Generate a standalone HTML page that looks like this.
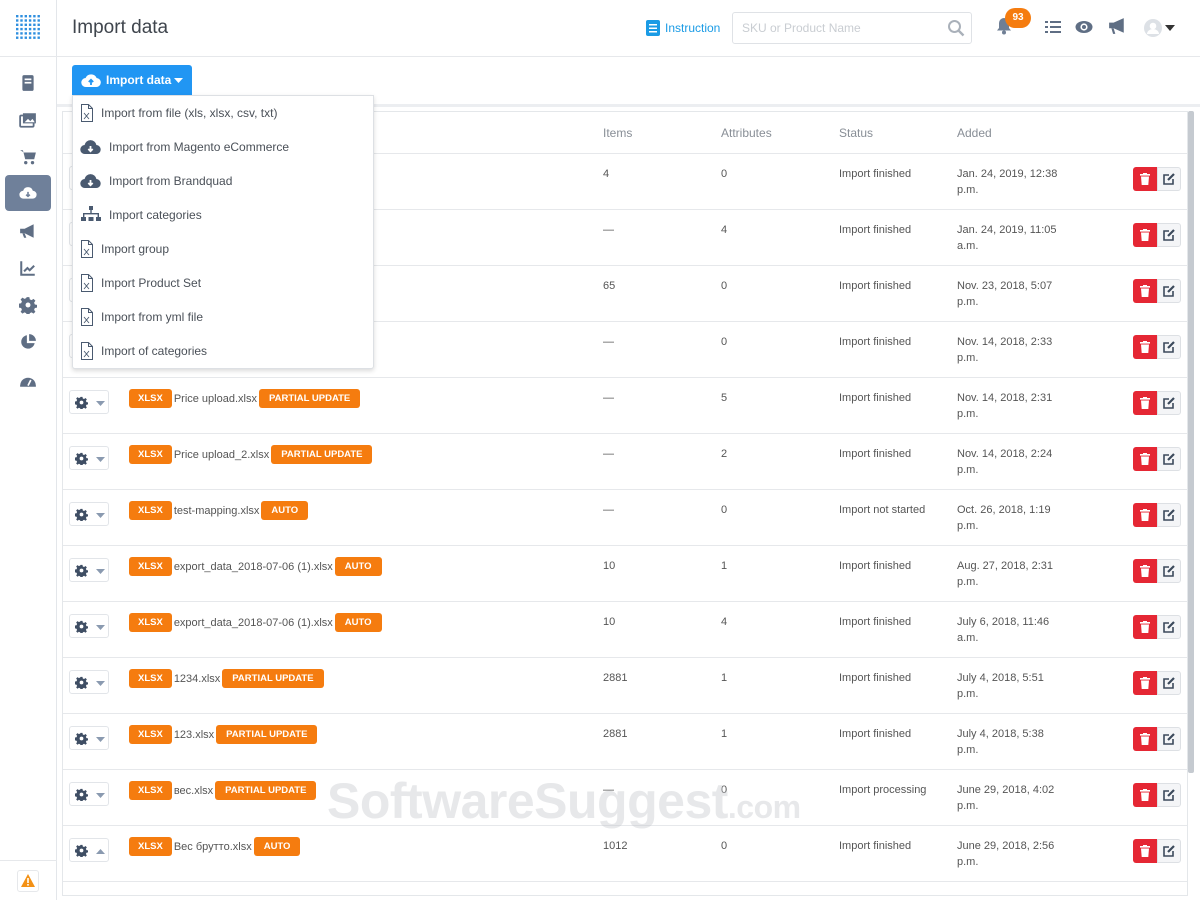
<!DOCTYPE html>
<html><head><meta charset="utf-8"><style>
*{box-sizing:border-box;margin:0;padding:0}
body{width:1200px;height:900px;overflow:hidden;background:#fff;font-family:"Liberation Sans","DejaVu Sans",sans-serif;color:#444;position:relative}
.a{position:absolute}
.sb{left:0;top:0;width:57px;height:900px;border-right:1px solid #e3e6ea;background:#fff}
.hdr{left:57px;top:0;width:1143px;height:57px;border-bottom:1px solid #e6e8eb;background:#fff}
.main{left:57px;top:57px;width:1143px;height:843px;background:#fff}
.card{left:62px;top:111px;width:1126px;height:785px;background:#fff;border:1px solid #e4e7ea}
.row{left:63px;width:1124px;height:56px;border-top:1px solid #e6e8eb}
.t{font-size:11px;color:#555;position:absolute;white-space:nowrap}
.badge{position:absolute;background:#f57c0f;color:#fff;font-size:9.5px;font-weight:bold;height:19px;line-height:19px;border-radius:3px;text-align:center;padding:0 10px}
.gear{position:absolute;left:6px;top:12px;width:40px;height:24px;border:1px solid #e2e5e9;border-radius:3px;background:#fff}
.del{position:absolute;left:1070px;top:13px;width:24px;height:24px;background:#e52734;border-radius:3px 0 0 3px}
.ed{position:absolute;left:1094px;top:13px;width:24px;height:24px;background:#f4f5f7;border:1px solid #dde0e4;border-radius:0 3px 3px 0}
.si{left:19px;width:18px;height:18px}
.dd{left:72px;top:95px;width:302px;height:274px;background:#fff;border:1px solid #dde0e4;box-shadow:0 2px 5px rgba(0,0,0,.15);border-radius:0 0 3px 3px}
.di{position:absolute;font-size:12px;color:#4a5058;white-space:nowrap}
</style></head><body>
<div class="a sb"></div>
<svg class="a" style="left:16px;top:15px" width="24" height="24" viewBox="0 0 24 24">
<g fill="#2f8fdf">
<rect x="0" y="0" width="2.4" height="2.4"/><rect x="4.3" y="0" width="2.4" height="2.4"/><rect x="8.6" y="0" width="2.4" height="2.4"/><rect x="12.9" y="0" width="2.4" height="2.4"/><rect x="17.2" y="0" width="2.4" height="2.4"/><rect x="21.5" y="0" width="2.4" height="2.4"/>
<rect x="0" y="4.3" width="2.4" height="2.4"/><rect x="4.3" y="4.3" width="2.4" height="2.4"/><rect x="8.6" y="4.3" width="2.4" height="2.4"/><rect x="12.9" y="4.3" width="2.4" height="2.4"/><rect x="17.2" y="4.3" width="2.4" height="2.4"/><rect x="21.5" y="4.3" width="2.4" height="2.4"/>
<rect x="0" y="8.6" width="2.4" height="2.4"/><rect x="4.3" y="8.6" width="2.4" height="2.4"/><rect x="8.6" y="8.6" width="2.4" height="2.4"/><rect x="12.9" y="8.6" width="2.4" height="2.4"/><rect x="17.2" y="8.6" width="2.4" height="2.4"/><rect x="21.5" y="8.6" width="2.4" height="2.4"/>
<rect x="0" y="12.9" width="2.4" height="2.4"/><rect x="4.3" y="12.9" width="2.4" height="2.4"/><rect x="8.6" y="12.9" width="2.4" height="2.4"/><rect x="12.9" y="12.9" width="2.4" height="2.4"/><rect x="17.2" y="12.9" width="2.4" height="2.4"/><rect x="21.5" y="12.9" width="2.4" height="2.4"/>
<rect x="0" y="17.2" width="2.4" height="2.4"/><rect x="4.3" y="17.2" width="2.4" height="2.4"/><rect x="8.6" y="17.2" width="2.4" height="2.4"/><rect x="12.9" y="17.2" width="2.4" height="2.4"/><rect x="17.2" y="17.2" width="2.4" height="2.4"/><rect x="21.5" y="17.2" width="2.4" height="2.4"/>
<rect x="0" y="21.5" width="2.4" height="2.4"/><rect x="4.3" y="21.5" width="2.4" height="2.4"/><rect x="8.6" y="21.5" width="2.4" height="2.4"/><rect x="12.9" y="21.5" width="2.4" height="2.4"/><rect x="17.2" y="21.5" width="2.4" height="2.4"/><rect x="21.5" y="21.5" width="2.4" height="2.4"/>
</g></svg>
<div class="a" style="left:0;top:56px;width:57px;border-top:1px solid #e6e8eb"></div>
<svg class="a si" style="top:74px" viewBox="0 0 16 16"><rect x="3" y="1" width="10" height="14" rx="1.5" fill="#5f6e84"/><rect x="5" y="4" width="6" height="1.5" fill="#fff"/><rect x="5" y="7" width="6" height="1.5" fill="#fff"/></svg>
<svg class="a si" style="top:111px" viewBox="0 0 16 16"><rect x="1" y="4" width="12" height="10" rx="1" fill="none" stroke="#5f6e84" stroke-width="1.6"/><rect x="3.5" y="2" width="11.5" height="9" fill="#5f6e84"/><path d="M5 10l3-3 2 2 2-2 2 3z" fill="#fff"/></svg>
<svg class="a si" style="top:148px" viewBox="0 0 16 16"><path d="M1 2h2.5l2 8h8l1.5-6H4.5" fill="#5f6e84"/><circle cx="6" cy="13" r="1.5" fill="#5f6e84"/><circle cx="12" cy="13" r="1.5" fill="#5f6e84"/></svg>
<div class="a" style="left:5px;top:175px;width:46px;height:36px;background:#6f809a;border-radius:4px"></div>
<svg class="a si" style="left:19px;top:184px" viewBox="0 0 16 16"><path d="M4 13a3.5 3.5 0 0 1-.3-7A4.5 4.5 0 0 1 12.3 6 3.5 3.5 0 0 1 12 13z" fill="#fff"/><path d="M8 7v4M6.3 9.5L8 11l1.7-1.5" stroke="#6f809a" stroke-width="1.4" fill="none"/></svg>
<svg class="a si" style="top:222px" viewBox="0 0 16 16"><path d="M1 6h4l8-4v12L5 10H1z" fill="#5f6e84"/><path d="M3 10l1.5 4h2L5 10" fill="#5f6e84"/></svg>
<svg class="a si" style="top:259px" viewBox="0 0 16 16"><path d="M2 2v12h12" stroke="#5f6e84" stroke-width="1.8" fill="none"/><path d="M4.5 11l3-3 2 2 4-4" stroke="#5f6e84" stroke-width="1.8" fill="none"/></svg>
<svg class="a si" style="top:296px" viewBox="0 0 16 16"><path d="M6.8 1h2.4l.4 2 1.6.7 1.7-1.2 1.7 1.7-1.2 1.7.7 1.6 2 .4v2.4l-2 .4-.7 1.6 1.2 1.7-1.7 1.7-1.7-1.2-1.6.7-.4 2H6.8l-.4-2-1.6-.7-1.7 1.2-1.7-1.7 1.2-1.7-.7-1.6-2-.4V6.8l2-.4.7-1.6-1.2-1.7 1.7-1.7 1.7 1.2 1.6-.7z" fill="#5f6e84"/><circle cx="8" cy="8" r="2.2" fill="#fff"/></svg>
<svg class="a si" style="top:333px" viewBox="0 0 16 16"><path d="M7 2a6 6 0 1 0 6.9 7H7z" fill="#5f6e84"/><path d="M9 1v6h6A6 6 0 0 0 9 1z" fill="#5f6e84"/></svg>
<svg class="a si" style="top:371px" viewBox="0 0 16 16"><path d="M1 13a7 7 0 0 1 14 0v1H1z" fill="#5f6e84"/><path d="M8 13l2.5-5" stroke="#fff" stroke-width="1.5"/></svg>
<div class="a" style="left:0;top:860px;width:57px;border-top:1px solid #e6e8eb"></div>
<div class="a" style="left:17px;top:870px;width:22px;height:22px;border:1px solid #e6e8eb;border-radius:3px;background:#fff"></div>
<svg class="a" style="left:21px;top:874px" width="14" height="13" viewBox="0 0 14 13"><path d="M7 0L14 13H0z" fill="#f39116"/><rect x="6.2" y="4" width="1.6" height="5" fill="#fff"/><rect x="6.2" y="10" width="1.6" height="1.6" fill="#fff"/></svg>

<div class="a hdr"></div>
<div class="a" style="left:72px;top:17px;font-size:19px;color:#3f454d">Import data</div>
<svg class="a" style="left:646px;top:20px" width="14" height="16" viewBox="0 0 14 16"><rect x="0" y="0" width="14" height="16" rx="2" fill="#1a9be5"/><rect x="3" y="4" width="8" height="1.5" fill="#fff"/><rect x="3" y="7.5" width="8" height="1.5" fill="#fff"/><rect x="3" y="11" width="8" height="1.5" fill="#fff"/></svg>
<div class="a" style="left:665px;top:21px;font-size:12px;color:#1a9be5">Instruction</div>
<div class="a" style="left:732px;top:12px;width:240px;height:32px;border:1px solid #dfe2e6;border-radius:3px"></div>
<div class="a" style="left:742px;top:21px;font-size:12px;color:#c9cdd2">SKU or Product Name</div>
<svg class="a" style="left:947px;top:19px" width="18" height="18" viewBox="0 0 18 18"><circle cx="7.5" cy="7.5" r="5.5" fill="none" stroke="#aab1ba" stroke-width="2"/><path d="M11.5 11.5l5 5" stroke="#aab1ba" stroke-width="2.4"/></svg>
<svg class="a" style="left:996px;top:17px" width="16" height="18" viewBox="0 0 16 18"><path d="M8 1a5 5 0 0 0-5 5v5l-2 2.5h14L13 11V6a5 5 0 0 0-5-5z" fill="#6f7f95"/><circle cx="8" cy="15.5" r="2" fill="#6f7f95"/></svg>
<div class="a" style="left:1005px;top:8px;width:26px;height:20px;border-radius:10px;background:#f57c0f;color:#fff;font-size:10px;font-weight:bold;text-align:center;line-height:20px">93</div>
<svg class="a" style="left:1045px;top:20px" width="16" height="14" viewBox="0 0 16 14"><g fill="#5f6e84"><rect x="5" y="1" width="11" height="2"/><rect x="5" y="6" width="11" height="2"/><rect x="5" y="11" width="11" height="2"/><rect x="0" y="1" width="3" height="2"/><rect x="0" y="6" width="3" height="2"/><rect x="0" y="11" width="3" height="2"/></g></svg>
<svg class="a" style="left:1075px;top:20px" width="18" height="14" viewBox="0 0 18 14"><ellipse cx="9" cy="7" rx="8.5" ry="6" fill="#5f6e84"/><circle cx="9" cy="7" r="3.6" fill="#fff"/><circle cx="9" cy="7" r="2" fill="#5f6e84"/></svg>
<svg class="a" style="left:1108px;top:17px" width="18" height="18" viewBox="0 0 16 16"><path d="M1 5h4l9-4v13L5 10H1z" fill="#5f6e84"/><path d="M3 10l1.5 5h2L5 10" fill="#5f6e84"/></svg>
<svg class="a" style="left:1144px;top:19px" width="18" height="18" viewBox="0 0 18 18"><circle cx="9" cy="9" r="9" fill="#dde1e6"/><circle cx="9" cy="7" r="3.3" fill="#fff"/><path d="M3 15a6 5 0 0 1 12 0" fill="#fff"/></svg>
<svg class="a" style="left:1165px;top:25px" width="10" height="6"><path d="M0 0h10L5 6z" fill="#333"/></svg>

<div class="a main"></div>
<div class="a" style="left:57px;top:104px;width:1143px;height:3px;background:#eceef1"></div>
<div class="a card"></div>
<div class="a" style="left:1188px;top:111px;width:6px;height:662px;background:#c5cad0;border-radius:2px"></div>
<div class="t" style="left:603px;top:126px;font-size:12px;color:#888e96">Items</div>
<div class="t" style="left:721px;top:126px;font-size:12px;color:#888e96">Attributes</div>
<div class="t" style="left:839px;top:126px;font-size:12px;color:#888e96">Status</div>
<div class="t" style="left:957px;top:126px;font-size:12px;color:#888e96">Added</div>

<div id="rows"></div>
<script>
var R=[
["Import_1.xlsx","AUTO","4","0","Import finished","Jan. 24, 2019, 12:38","p.m."],
["Import_2.xlsx","AUTO","—","4","Import finished","Jan. 24, 2019, 11:05","a.m."],
["Import_3.xlsx","AUTO","65","0","Import finished","Nov. 23, 2018, 5:07","p.m."],
["Import_4.xlsx","AUTO","—","0","Import finished","Nov. 14, 2018, 2:33","p.m."],
["Price upload.xlsx","PARTIAL UPDATE","—","5","Import finished","Nov. 14, 2018, 2:31","p.m."],
["Price upload_2.xlsx","PARTIAL UPDATE","—","2","Import finished","Nov. 14, 2018, 2:24","p.m."],
["test-mapping.xlsx","AUTO","—","0","Import not started","Oct. 26, 2018, 1:19","p.m."],
["export_data_2018-07-06 (1).xlsx","AUTO","10","1","Import finished","Aug. 27, 2018, 2:31","p.m."],
["export_data_2018-07-06 (1).xlsx","AUTO","10","4","Import finished","July 6, 2018, 11:46","a.m."],
["1234.xlsx","PARTIAL UPDATE","2881","1","Import finished","July 4, 2018, 5:51","p.m."],
["123.xlsx","PARTIAL UPDATE","2881","1","Import finished","July 4, 2018, 5:38","p.m."],
["вес.xlsx","PARTIAL UPDATE","—","0","Import processing","June 29, 2018, 4:02","p.m."],
["Вес брутто.xlsx","AUTO","1012","0","Import finished","June 29, 2018, 2:56","p.m."]];
var G='<path d="M6.8 1h2.4l.4 2 1.6.7 1.7-1.2 1.7 1.7-1.2 1.7.7 1.6 2 .4v2.4l-2 .4-.7 1.6 1.2 1.7-1.7 1.7-1.7-1.2-1.6.7-.4 2H6.8l-.4-2-1.6-.7-1.7 1.2-1.7-1.7 1.2-1.7-.7-1.6-2-.4V6.8l2-.4.7-1.6-1.2-1.7 1.7-1.7 1.7 1.2 1.6-.7z" fill="#3f4e64"/><circle cx="8" cy="8" r="2.3" fill="#fff"/>';
var h="";
R.forEach(function(r,i){var t=153+i*56;
h+='<div class="a row" style="top:'+t+'px">'+
'<div class="gear"><svg style="position:absolute;left:5px;top:5px" width="13" height="13" viewBox="0 0 16 16">'+G+'</svg><svg style="position:absolute;left:26px;top:10px" width="9" height="5"><path d="'+(i==12?'M0 5h9L4.5 0z':'M0 0h9L4.5 5z')+'" fill="#8a9ab0"/></svg></div>'+
'<div style="position:absolute;left:66px;top:11px;display:flex;align-items:center;height:19px"><span class="badge" style="position:static;padding:0 9px">XLSX</span><span style="font-size:11px;color:#555;margin:0 2px;white-space:nowrap">'+r[0]+'</span><span class="badge" style="position:static">'+r[1]+'</span></div>'+
'<div class="t" style="left:540px;top:14px">'+r[2]+'</div>'+
'<div class="t" style="left:658px;top:14px">'+r[3]+'</div>'+
'<div class="t" style="left:776px;top:14px">'+r[4]+'</div>'+
'<div class="t" style="left:894px;top:14px">'+r[5]+'</div>'+
'<div class="t" style="left:894px;top:30px">'+r[6]+'</div>'+
'<div class="del"><svg style="position:absolute;left:7px;top:6px" width="10" height="12" viewBox="0 0 10 12"><rect x="0" y="1" width="10" height="1.6" fill="#fff"/><rect x="3" y="0" width="4" height="1.5" fill="#fff"/><path d="M1 3.5h8l-.7 8.5H1.7z" fill="#fff"/></svg></div>'+
'<div class="ed"><svg style="position:absolute;left:5px;top:5px" width="12" height="12" viewBox="0 0 12 12"><path d="M6 2H1v9h9V6" fill="none" stroke="#3c4a5c" stroke-width="1.6"/><path d="M5 7l6-6" stroke="#3c4a5c" stroke-width="2.2"/></svg></div>'+
'</div>';});
h+='<div class="a" style="left:63px;top:881px;width:1124px;border-top:1px solid #e6e8eb"></div>';
document.getElementById("rows").outerHTML=h;
</script>

<div class="a" style="left:327px;top:772px;font-size:50px;font-weight:bold;color:rgba(195,198,202,.4);white-space:nowrap;letter-spacing:-0.5px">SoftwareSuggest<span style="font-size:32px">.com</span></div>

<div class="a" style="left:72px;top:65px;width:120px;height:30px;background:#2196f3;border-radius:3px 3px 0 0"></div>
<svg class="a" style="left:81px;top:72px" width="20" height="16" viewBox="0 0 20 16"><path d="M5 15a4.5 4.5 0 0 1-.4-9A6 6 0 0 1 15.6 6 4.5 4.5 0 0 1 15 15z" fill="#fff"/><path d="M10 13V8M7.8 10L10 7.8 12.2 10" stroke="#2196f3" stroke-width="1.8" fill="none"/></svg>
<div class="a" style="left:106px;top:73px;font-size:12px;font-weight:bold;color:#fff">Import data</div>
<svg class="a" style="left:174px;top:78px" width="9" height="5"><path d="M0 0h9L4.5 5z" fill="#fff"/></svg>

<div class="a dd">
<div class="di" style="left:28px;top:10px">Import from file (xls, xlsx, csv, txt)</div>
<div class="di" style="left:36px;top:44px">Import from Magento eCommerce</div>
<div class="di" style="left:36px;top:78px">Import from Brandquad</div>
<div class="di" style="left:36px;top:112px">Import categories</div>
<div class="di" style="left:28px;top:146px">Import group</div>
<div class="di" style="left:28px;top:180px">Import Product Set</div>
<div class="di" style="left:28px;top:214px">Import from yml file</div>
<div class="di" style="left:28px;top:248px">Import of categories</div>
</div>
<svg class="a" style="left:80px;top:104px" width="14" height="260" viewBox="0 0 14 260">
<g fill="none" stroke="#4a5a70" stroke-width="1">
<path d="M1.5 .5h7l4 4v13h-11z"/><path d="M8.5 .5v4h4"/><path d="M4 9l5 6M9 9l-5 6" stroke-width=".9"/>
<path d="M1.5 136.5h7l4 4v13h-11z"/><path d="M8.5 136.5v4h4"/><path d="M4 145l5 6M9 145l-5 6" stroke-width=".9"/>
<path d="M1.5 170.5h7l4 4v13h-11z"/><path d="M8.5 170.5v4h4"/><path d="M4 179l5 6M9 179l-5 6" stroke-width=".9"/>
<path d="M1.5 204.5h7l4 4v13h-11z"/><path d="M8.5 204.5v4h4"/><path d="M4 213l5 6M9 213l-5 6" stroke-width=".9"/>
<path d="M1.5 238.5h7l4 4v13h-11z"/><path d="M8.5 238.5v4h4"/><path d="M4 247l5 6M9 247l-5 6" stroke-width=".9"/>
</g></svg>
<svg class="a" style="left:80px;top:139px" width="21" height="16" viewBox="0 0 21 16"><path d="M5 15a4.5 4.5 0 0 1-.4-9A6 6 0 0 1 16.4 6 4.5 4.5 0 0 1 16 15z" fill="#4a5a70"/><path d="M10.5 7v5M8.3 10l2.2 2.2 2.2-2.2" stroke="#fff" stroke-width="1.8" fill="none"/></svg>
<svg class="a" style="left:80px;top:173px" width="21" height="16" viewBox="0 0 21 16"><path d="M5 15a4.5 4.5 0 0 1-.4-9A6 6 0 0 1 16.4 6 4.5 4.5 0 0 1 16 15z" fill="#4a5a70"/><path d="M10.5 7v5M8.3 10l2.2 2.2 2.2-2.2" stroke="#fff" stroke-width="1.8" fill="none"/></svg>
<svg class="a" style="left:81px;top:206px" width="20" height="16" viewBox="0 0 20 16"><g fill="#4a5a70"><rect x="8" y="0" width="4" height="4"/><rect x="9.3" y="4" width="1.4" height="4"/><rect x="2" y="7" width="16" height="1.4"/><rect x="2" y="7" width="1.4" height="4"/><rect x="16.6" y="7" width="1.4" height="4"/><rect x="0" y="11" width="5" height="4"/><rect x="7.5" y="11" width="5" height="4"/><rect x="15" y="11" width="5" height="4"/></g></svg>
</body></html>
